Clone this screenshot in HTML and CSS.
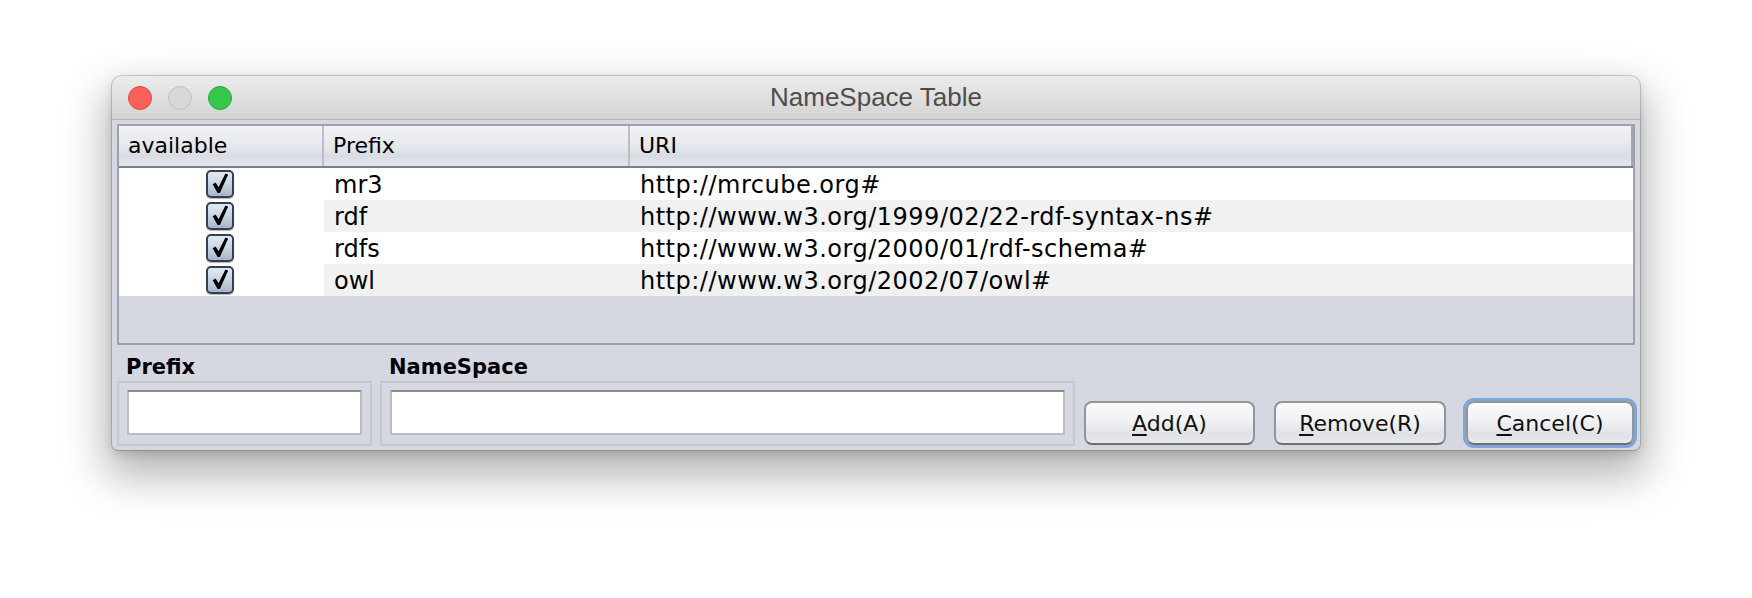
FILE: index.html
```html
<!DOCTYPE html>
<html lang="en">
<head>
<meta charset="utf-8">
<title>NameSpace Table</title>
<link rel="stylesheet" href="styles.css">
</head>
<body>
<div class="stage">
  <div class="window">
    <div class="titlebar">
      <div class="lights">
        <span class="light red"></span>
        <span class="light gray"></span>
        <span class="light green"></span>
      </div>
      <div class="title">NameSpace Table</div>
      <div></div>
    </div>
    <div class="content">
      <div class="table">
        <div class="thead">
          <div class="th">available</div>
          <div class="th">Prefix</div>
          <div class="th">URI</div>
        </div>
        <div class="tr">
          <div class="td check"><span class="cb"><svg viewBox="0 0 22 22"><path d="M3.6 11.2 L6.6 9.6 L9.6 14.2 L16.4 0.4 L19.2 1.6 L10.9 20 L8.6 20 Z"/></svg></span></div>
          <div class="td">mr3</div>
          <div class="td uri">http://mrcube.org#</div>
        </div>
        <div class="tr alt">
          <div class="td check"><span class="cb"><svg viewBox="0 0 22 22"><path d="M3.6 11.2 L6.6 9.6 L9.6 14.2 L16.4 0.4 L19.2 1.6 L10.9 20 L8.6 20 Z"/></svg></span></div>
          <div class="td">rdf</div>
          <div class="td uri">http://www.w3.org/1999/02/22-rdf-syntax-ns#</div>
        </div>
        <div class="tr">
          <div class="td check"><span class="cb"><svg viewBox="0 0 22 22"><path d="M3.6 11.2 L6.6 9.6 L9.6 14.2 L16.4 0.4 L19.2 1.6 L10.9 20 L8.6 20 Z"/></svg></span></div>
          <div class="td">rdfs</div>
          <div class="td uri">http://www.w3.org/2000/01/rdf-schema#</div>
        </div>
        <div class="tr alt">
          <div class="td check"><span class="cb"><svg viewBox="0 0 22 22"><path d="M3.6 11.2 L6.6 9.6 L9.6 14.2 L16.4 0.4 L19.2 1.6 L10.9 20 L8.6 20 Z"/></svg></span></div>
          <div class="td">owl</div>
          <div class="td uri">http://www.w3.org/2002/07/owl#</div>
        </div>
      </div>
      <div class="form">
        <div class="group prefix">
          <div class="label">Prefix</div>
          <div class="field-panel"><div class="field"></div></div>
        </div>
        <div class="group ns">
          <div class="label">NameSpace</div>
          <div class="field-panel"><div class="field"></div></div>
        </div>
        <div class="buttons">
          <button class="btn add"><u>A</u>dd(A)</button>
          <button class="btn remove"><u>R</u>emove(R)</button>
          <button class="btn cancel"><u>C</u>ancel(C)</button>
        </div>
      </div>
    </div>
  </div>
</div>
</body>
</html>
```

FILE: styles.css
```css
html, body {
  margin: 0;
  background: #ffffff;
  font-family: "DejaVu Sans", "Noto Sans", sans-serif;
  color: #000;
}

.stage {
  height: 598px;
  box-sizing: border-box;
  padding: 76px 0 0 112px;
  overflow: hidden;
}

.window {
  width: 1528px;
  height: 374px;
  box-sizing: border-box;
  border-radius: 10px 10px 6px 6px;
  background: #d5d8e0;
  overflow: hidden;
  display: flex;
  flex-direction: column;
  box-shadow: 0 0 0 1px rgba(0, 0, 0, 0.16), 0 20px 44px 6px rgba(0, 0, 0, 0.3), 0 4px 10px rgba(0, 0, 0, 0.14);
}

.titlebar {
  height: 44px;
  box-sizing: border-box;
  border-bottom: 1px solid #b3b3b3;
  background: linear-gradient(#ececec, #d3d3d3);
  display: grid;
  grid-template-columns: 1fr auto 1fr;
  align-items: center;
}

.lights {
  display: flex;
  gap: 16px;
  padding-left: 16px;
}

.light {
  width: 24px;
  height: 24px;
  box-sizing: border-box;
  border-radius: 50%;
  border: 1px solid;
}

.red { background: #fc605b; border-color: #de4a46; }
.gray { background: #d7d7d7; border-color: #c0c0c0; }
.green { background: #35c84a; border-color: #28aa36; }

.title {
  font-family: "Liberation Sans", Arial, sans-serif;
  font-size: 26px;
  color: #4d4d4d;
  white-space: nowrap;
}

.content {
  flex: 1;
  padding: 4px 5px 4px 5px;
  display: flex;
  flex-direction: column;
}

.table {
  height: 221px;
  box-sizing: border-box;
  border: 2px solid #9ea1ab;
  background: #d5d8e0;
}

.thead,
.tr {
  display: grid;
  grid-template-columns: 205px 306px 1fr;
}

.thead {
  height: 42px;
  box-sizing: border-box;
  border-bottom: 2px solid #7b7f89;
  background: linear-gradient(#f1f2f5 0%, #e7e9ed 45%, #d9dce3 75%, #e4e7ee 100%);
}

.th {
  font-size: 22px;
  line-height: 40px;
  padding-left: 9px;
  border-right: 2px solid #bbbec6;
  white-space: nowrap;
}

.th:last-child {
  border-right-color: #a3a6ae;
}

.tr {
  height: 32px;
}

.td {
  background: #ffffff;
  font-size: 24px;
  line-height: 28px;
  padding: 3px 0 1px 10px;
  white-space: nowrap;
  overflow: hidden;
}

.tr.alt .td {
  background: #f1f1f1;
}

.tr .td.check {
  background: #ffffff;
  padding: 0;
  display: flex;
  align-items: center;
  justify-content: center;
}

.uri {
  letter-spacing: 0.5px;
}

.cb {
  width: 28px;
  height: 28px;
  box-sizing: border-box;
  border: 2px solid #37404f;
  border-radius: 5px;
  background: linear-gradient(#e3eaf3 0%, #c9d4e2 50%, #a5b6cb 100%);
  box-shadow: 0 1px 1px rgba(0, 0, 0, 0.3);
  display: flex;
  align-items: center;
  justify-content: center;
  margin-left: -3px;
}

.cb svg {
  width: 22px;
  height: 22px;
  fill: #000;
}

.form {
  flex: 1;
  display: flex;
  align-items: flex-end;
}

.group {
  display: flex;
  flex-direction: column;
}

.group.prefix {
  width: 255px;
  margin-right: 8px;
}

.group.ns {
  width: 695px;
  margin-right: 9px;
}

.label {
  font-weight: bold;
  font-size: 21px;
  line-height: 26px;
  padding-left: 9px;
  margin-bottom: 1px;
}

.field-panel {
  height: 65px;
  box-sizing: border-box;
  border: 2px solid #c6c8ce;
  padding: 7px 8px 9px;
}

.field {
  height: 45px;
  box-sizing: border-box;
  background: #ffffff;
  border: 2px solid #bcbcbc;
  border-top-color: #8c8c8c;
}

.buttons {
  display: flex;
  margin-bottom: 1px;
}

.btn {
  height: 44px;
  box-sizing: border-box;
  border: 2px solid #939498;
  border-bottom-color: #6e6f73;
  border-radius: 8px;
  background: linear-gradient(#fafafb 0%, #f0f1f3 45%, #dfe1e6 80%, #e8eaee 100%);
  font-family: "DejaVu Sans", sans-serif;
  font-size: 22px;
  color: #111;
  padding: 0;
  text-align: center;
}

.btn u {
  text-decoration-thickness: 2px;
  text-underline-offset: 3px;
}

.btn.add { width: 171px; margin-right: 19px; }
.btn.remove { width: 172px; margin-right: 20px; }
.btn.cancel {
  width: 168px;
  box-shadow: 0 0 0 3px #7ca7d8;
}
```
